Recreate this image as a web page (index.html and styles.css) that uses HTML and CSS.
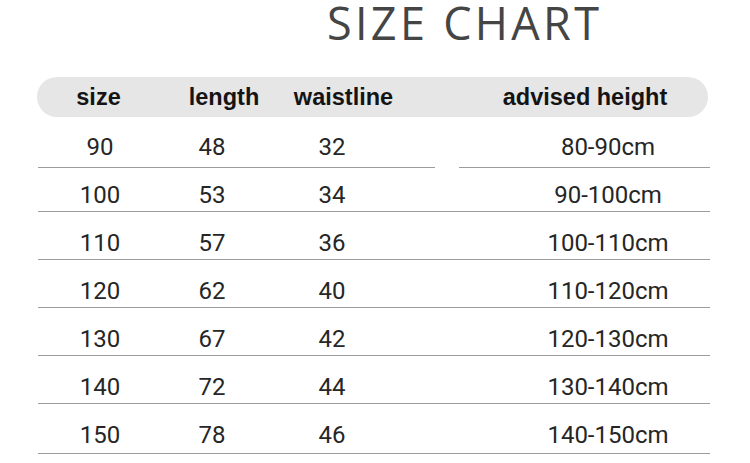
FILE: index.html
```html
<!DOCTYPE html>
<html>
<head>
<meta charset="utf-8">
<link rel="stylesheet" href="styles.css">
</head>
<body>
<div class="page">
  <h1 class="title">SIZE CHART</h1>
  <div class="chart">
    <div class="head">
      <div class="hcell">size</div>
      <div class="hcell">length</div>
      <div class="hcell">waistline</div>
      <div class="hcell last">advised height</div>
    </div>
    <div class="row first"><div class="cell">90</div><div class="cell">48</div><div class="cell">32</div><div class="cell last">80-90cm</div></div>
    <div class="row second"><div class="cell">100</div><div class="cell">53</div><div class="cell">34</div><div class="cell last">90-100cm</div></div>
    <div class="row"><div class="cell">110</div><div class="cell">57</div><div class="cell">36</div><div class="cell last">100-110cm</div></div>
    <div class="row"><div class="cell">120</div><div class="cell">62</div><div class="cell">40</div><div class="cell last">110-120cm</div></div>
    <div class="row"><div class="cell">130</div><div class="cell">67</div><div class="cell">42</div><div class="cell last">120-130cm</div></div>
    <div class="row"><div class="cell">140</div><div class="cell">72</div><div class="cell">44</div><div class="cell last">130-140cm</div></div>
    <div class="row lastrow"><div class="cell">150</div><div class="cell">78</div><div class="cell">46</div><div class="cell last">140-150cm</div></div>
  </div>
</div>
</body>
</html>
```
FILE: styles.css
```css
* { box-sizing: border-box; }
html, body { margin: 0; padding: 0; background: #fff; }
body { width: 750px; height: 463px; overflow: hidden; }

.page { width: 750px; padding-top: 8px; }

.title {
  margin: 0;
  margin-top: -8px;
  padding-left: 327px;
  font-family: "Open Sans", "Noto Sans", sans-serif;
  font-weight: 400;
  font-size: 45px;
  line-height: 45px;
  letter-spacing: 3.3px;
  color: #454545;
  white-space: nowrap;
}

.chart {
  margin-top: 32px;
  padding-left: 37px;
  width: 710px;
}

.head {
  height: 40px;
  width: 671px;
  background: #e6e6e6;
  border-radius: 20px;
  display: grid;
  grid-template-columns: 123px 128px 111px 1fr;
  align-items: center;
  font-family: "Liberation Sans", Arial, sans-serif;
  font-weight: 700;
  font-size: 23.5px;
  color: #141414;
}
.hcell { text-align: center; line-height: 40px; }
.hcell.last { padding-left: 63px; }

.row {
  margin-left: 1px;
  width: 672px;
  display: grid;
  grid-template-columns: 124px 100px 140px 1fr;
  font-family: Roboto, "Noto Sans", sans-serif;
  font-size: 24px;
  color: #262626;
  padding-top: 16px;
  padding-bottom: 1px;
  border-bottom: 1px solid #9c9c9c;
}
.cell { text-align: center; line-height: 30px; }
.cell.last { padding-left: 104px; }

.row.first {
  padding-top: 15px;
  padding-bottom: 6px;
  border-bottom: 0;
  background: linear-gradient(to right, #9c9c9c 0 397px, transparent 397px 421px, #9c9c9c 421px) left bottom / 100% 1px no-repeat;
}
.row.second { padding-top: 12px; }
.row.lastrow { padding-bottom: 3px; }
```
